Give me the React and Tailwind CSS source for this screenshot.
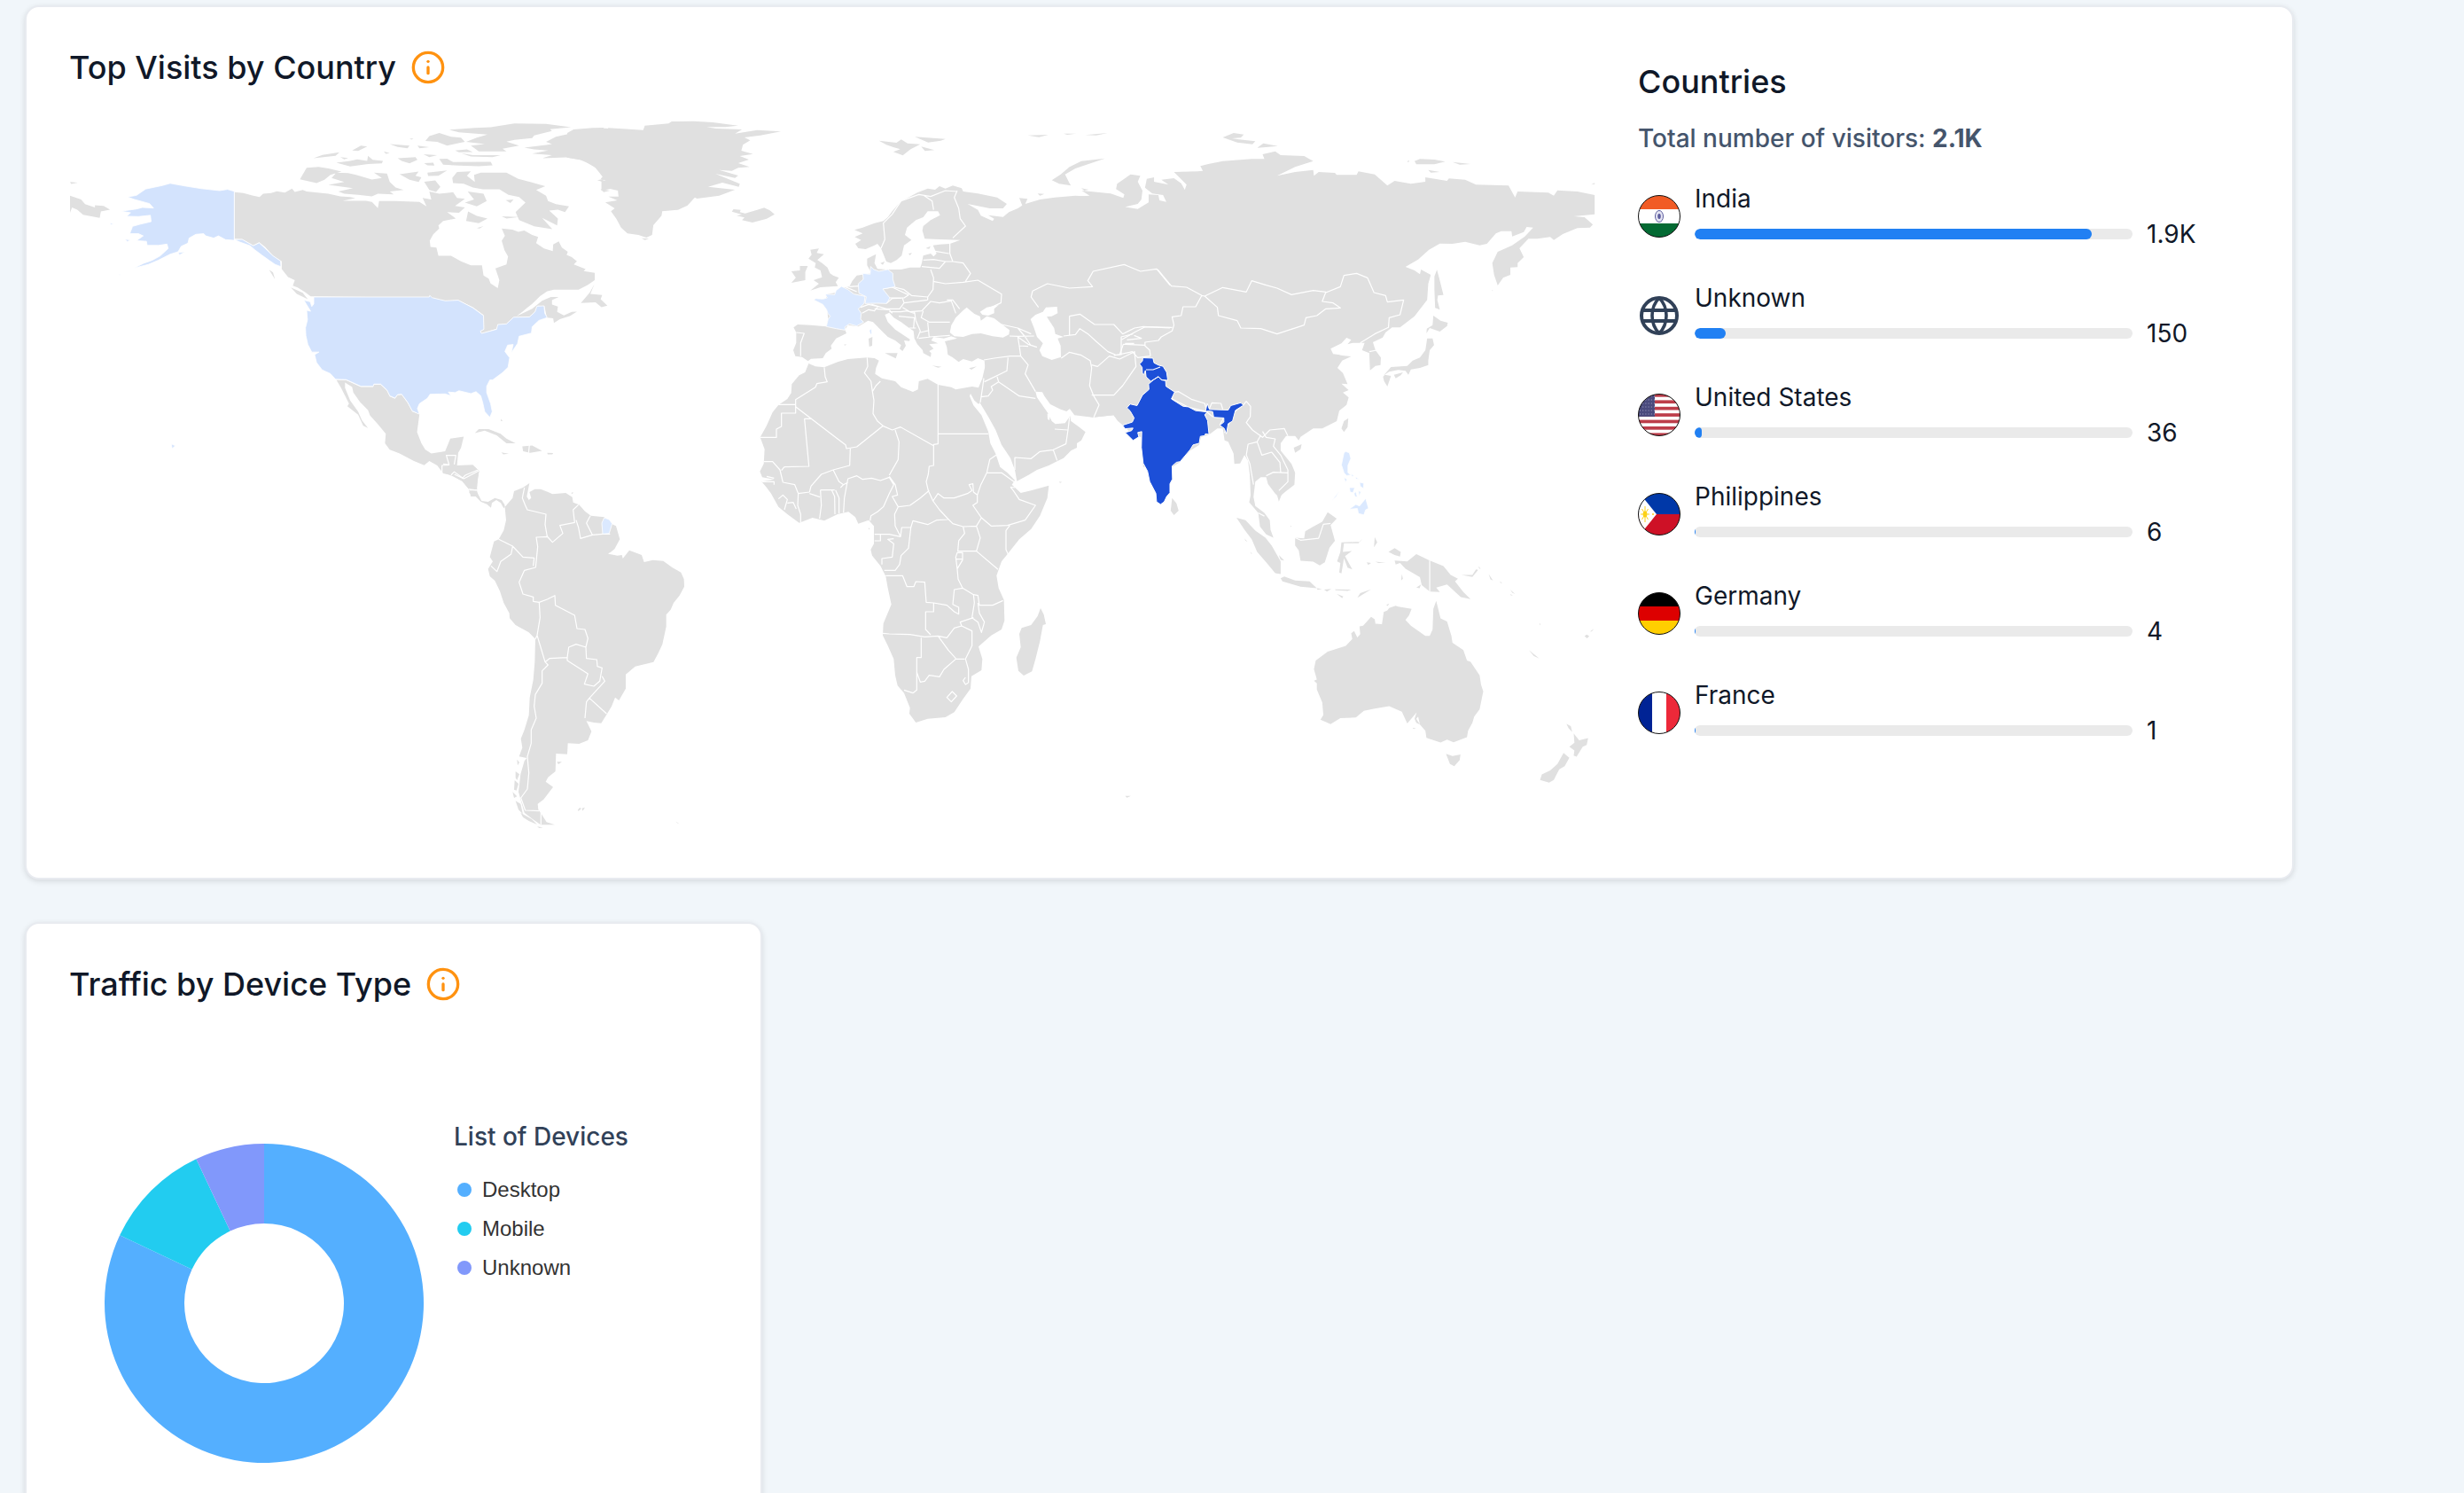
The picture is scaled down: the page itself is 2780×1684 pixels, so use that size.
import React from 'react';
import { Info } from 'lucide-react';

const countries = [
  { name: 'India', visits: '1.9K', percent: 90.7, flag: 'in' },
  { name: 'Unknown', visits: '150', percent: 7.1, flag: null },
  { name: 'United States', visits: '36', percent: 1.7, flag: 'us' },
  { name: 'Philippines', visits: '6', percent: 0.28, flag: 'ph' },
  { name: 'Germany', visits: '4', percent: 0.22, flag: 'de' },
  { name: 'France', visits: '1', percent: 0.2, flag: 'fr' },
];

const devices = [
  { name: 'Desktop', share: 82, color: '#54afff' },
  { name: 'Mobile', share: 11, color: '#22ccf0' },
  { name: 'Unknown', share: 7, color: '#8198fb' },
];

// Each region has its own local coordinate grid, placed on the map by transform.
const regions = [
  {
    id: 'north-america',
    transform: 'scale(0.44643 0.35714)',
    land: `M593,607 615,610 640,618 656,622 665,612 685,610 700,604 720,608 738,596 745,606 765,600 775,605 830,612 860,620 885,622 898,626 866,634 925,634 940,638 955,657 958,635 1000,635 1060,638 1078,652 1068,625 1090,630 1085,605 1110,612 1145,607 1155,625 1175,628 1150,650 1175,655 1160,672 1130,670 1152,690 1120,698 1108,712 1110,722 1095,740 1086,760 1088,780 1103,782 1108,808 1140,808 1165,825 1190,838 1218,838 1222,870 1235,880 1240,895 1258,910 1262,885 1252,848 1280,835 1284,810 1275,790 1268,760 1276,745 1268,722 1295,725 1310,732 1325,728 1345,742 1360,748 1355,768 1375,785 1397,793 1398,772 1412,762 1420,782 1435,795 1432,805 1445,812 1458,825 1450,835 1480,850 1475,856 1503,862 1503,885 1485,900 1462,915 1400,915 1383,920 1365,935 1345,960 1332,972 1320,985 1305,999 1345,975 1370,950 1392,938 1412,938 1395,948 1395,962 1410,968 1408,985 1425,996 1445,985 1458,984 1440,998 1415,1008 1400,1020 1398,1005 1382,1003 1376,967 1360,965 1352,985 1338,1000 1298,1002 1280,1022 1258,1025 1255,1038 1217,1053 1214,1045 1223,1040 1222,995 1195,970 1158,948 1125,950 1090,940 785,936 770,922 752,908 740,902 745,885 728,875 712,850 712,825 690,808 670,780 655,765 640,775 612,755 593,754Z
      M775,530 805,527 830,532 863,542 835,552 820,568 800,578 758,566Z
      M850,545 880,547 900,552 940,567 965,562 945,545 978,548 985,575 1000,592 1020,600 985,605 995,614 955,612 940,620 905,615 870,612 855,605 892,594 830,584 870,575 838,562Z
      M1135,410 1200,404 1240,402 1300,390 1380,391 1443,402 1390,408 1395,414 1350,428 1345,436 1300,442 1280,447 1312,460 1270,470 1280,478 1210,478 1190,460 1225,455 1178,448 1205,435 1232,425 1160,418Z
      M1085,430 1110,420 1140,432 1165,435 1175,448 1158,452 1130,460 1105,448 1075,445Z
      M1110,502 1130,501 1145,512 1240,511 1245,522 1210,525 1160,523 1120,520Z
      M1165,484 1195,490 1265,490 1245,496 1190,494Z M1150,475 1180,472 1195,480 1160,481Z
      M792,500 815,489 858,481 848,492 Z M850,514 885,508 903,503 928,508 930,492 942,505 968,508 965,516 930,518 885,526Z
      M860,496 880,499 870,503Z M890,475 912,460 928,463 905,477Z M985,455 1035,460 1030,468 1005,464Z M1055,460 1085,465 1060,468Z M1005,500 1050,496 1055,505 1035,516 1015,508Z M1070,487 1105,490 1085,496Z M1072,515 1095,514 1098,523 1080,522Z M1080,545 1130,538 1108,555 1082,556Z
      M1010,550 1058,542 1050,555 1065,560 1058,575 1035,568Z M1072,574 1100,570 1113,590 1102,606 1085,600Z M1035,438 1045,437 1040,441Z M970,478 985,484 975,486Z
      M1155,543 1190,541 1180,555 1200,575 1198,552 1215,545 1280,545 1310,565 1340,575 1378,588 1355,600 1380,618 1385,635 1405,645 1438,652 1428,670 1410,662 1388,665 1410,690 1408,712 1370,688 1396,724 1350,715 1312,695 1303,670 1328,640 1312,622 1285,615 1262,598 1220,598 1195,592 1172,580 1145,578 1143,562Z
      M1182,605 1222,612 1230,635 1205,652 1175,640 1198,630Z M1183,668 1205,682 1232,690 1210,705 1178,698Z M1278,632 1298,630 1290,641Z M1268,683 1312,685 1280,690Z M1205,720 1222,714 1212,722Z
      M1502,898 1492,928 1522,932 1518,945 1535,965 1520,970 1505,955 1468,957 1490,925Z
      M735,908 765,925 778,945 750,928Z M680,852 690,860 695,882Z
      M177,618 205,630 215,645 240,655 240,648 262,650 278,662 255,668 252,688 210,678 195,662 182,655 177,672Z M177,575 197,577 180,581Z
      M850,1200 875,1201 912,1222 943,1222 945,1215 962,1215 978,1234 985,1252 998,1259 1005,1248 1015,1247 1030,1272 1042,1300 1060,1308 1054,1365 1065,1400 1075,1420 1090,1432 1125,1425 1138,1385 1172,1379 1165,1415 1158,1430 1155,1470 1195,1468 1211,1488 1206,1520 1205,1568 1190,1568 1185,1545 1168,1520 1140,1500 1120,1495 1105,1470 1085,1456 1072,1469 1045,1455 1010,1432 985,1420 973,1400 975,1370 955,1340 935,1312 930,1295 910,1270 893,1240 890,1222 872,1208 872,1225 885,1265 905,1300 915,1328 930,1352 918,1345 905,1310 878,1283 882,1275 862,1225Z
      M1200,1368 1210,1355 1235,1355 1265,1370 1280,1385 1303,1400 1280,1400 1255,1375 1225,1360Z M1320,1410 1345,1407 1370,1424 1340,1430 1322,1425Z M1267,1429 1286,1433 1272,1435Z M1383,1430 1398,1431 1396,1435 1384,1435Z M1266,1322 1270,1330 1266,1330Z
      M1325,466 1380,458 1395,455 1380,448 1405,432 1440,422 1450,410 1530,405 1568,408 1568,585 1518,565 1525,555 1505,530 1475,507 1430,497 1370,500 1395,490 1345,485 1385,475 1350,472Z
      M1520,570 1555,572 1568,590 1520,602Z`,
    border: `M1117,1497 1117,1470 1135,1468 1128,1438 1152,1438 1148,1467 M1140,1500 1148,1490 1172,1512 1186,1503 1210,1487 M1185,1545 1205,1548 M1338,1405 1336,1430`,
    tint: [
      {
        fill: '#d3e3fd',
        d: `M592,604 575,598 555,602 510,596 470,588 430,579 410,586 368,597 345,617 322,622 340,630 378,643 388,657 360,655 345,660 306,667 330,672 320,683 350,684 380,680 382,700 355,708 335,715 328,738 350,738 362,745 345,760 370,762 372,775 400,775 422,771 425,785 405,808 385,822 362,832 338,847 375,835 400,822 430,803 450,795 458,778 475,768 478,752 495,740 515,738 520,745 540,752 552,745 570,757 592,759Z
          M592,757 612,756 640,776 655,767 668,782 690,808 709,824 710,842 695,835 680,822 662,806 645,790 632,776 605,764Z
          M278,704 288,708 280,710Z M316,755 330,758 322,763Z M450,798 468,795 454,805Z M433,1402 443,1408 435,1417Z M300,865 306,868 302,869Z
          M793,938 1085,938 1086,933 1092,940 1125,950 1158,948 1195,972 1222,997 1223,1040 1214,1046 1217,1053 1255,1040 1258,1025 1280,1023 1298,1002 1338,1001 1352,985 1357,967 1375,966 1377,990 1383,1003 1362,1012 1345,1032 1343,1052 1312,1062 1308,1085 1292,1115 1297,1088 1283,1090 1276,1110 1288,1130 1284,1160 1270,1177 1245,1200 1238,1200 1230,1220 1230,1240 1240,1275 1244,1300 1238,1318 1225,1300 1220,1272 1215,1250 1203,1237 1190,1243 1160,1234 1150,1240 1133,1238 1140,1250 1125,1244 1087,1245 1080,1258 1060,1275 1055,1290 1060,1308 1042,1298 1030,1270 1015,1245 1005,1246 998,1257 985,1250 978,1232 962,1213 945,1213 943,1220 912,1220 875,1199 848,1198 835,1180 814,1168 800,1145 795,1120 806,1112 788,1112 778,1088 773,1060 772,1035 777,1010 775,980 785,983 768,948 784,953 788,968 793,960Z`,
      },
    ],
  },
  {
    id: 'north-atlantic',
    transform: 'translate(640 100) scale(0.35714 0.33333)',
    land: `M0,150 20,138 80,133 115,132 120,145 130,133 240,140 245,125 320,118 330,111 400,110 460,114 540,125 500,130 440,130 470,135 552,138 530,152 600,140 675,145 610,158 560,165 578,175 555,190 550,210 587,221 545,228 574,240 540,252 576,265 540,268 520,278 480,275 540,294 530,302 468,288 545,322 542,332 490,318 445,332 530,342 480,362 410,372 403,368 380,395 350,410 300,415 298,430 272,462 268,495 250,504 225,495 190,490 170,470 155,440 138,415 150,405 120,385 158,378 130,365 162,365 160,345 120,335 162,328 120,310 85,262 40,240 0,233Z
      M95,310 115,305 112,316Z M105,340 135,345 115,350Z M235,506 258,508 245,512Z
      M525,408 548,410 545,418 562,422 600,410 622,403 640,412 655,425 630,440 585,453 552,445 560,436 535,430 552,426 520,416Z
      M985,176 1040,183 1055,172 1075,185 1115,188 1085,205 1060,226 1030,214 1052,205 1030,198 1008,190Z M1098,163 1195,170 1180,176 1140,182Z M1118,196 1160,208 1130,211Z M1455,158 1520,156 1490,164Z
      M768,545 795,541 788,556 811,560 790,580 805,590 822,605 830,625 840,632 858,640 848,655 855,668 800,672 768,683 795,660 778,648 805,638 800,615 782,605 785,590 762,575 772,562Z
      M735,600 760,600 752,620 752,648 708,657 722,640 708,618 735,615Z M0,1378 15,1382 5,1390Z`,
  },
  {
    id: 'europe-middle-east',
    transform: 'translate(820 180) scale(0.33333)',
    land: `M432,238 460,230 500,215 530,208 545,195 560,175 590,140 620,125 645,112 680,98 705,102 720,90 740,98 765,88 795,97 800,108 850,115 915,128 948,150 935,165 890,165 815,150 850,170 860,190 900,208 905,200 885,188 935,194 955,178 985,165 1000,155 990,130 1018,133 1010,150 1060,135 1110,128 1180,122 1230,125 1500,250 1500,760 1350,895 1325,885 1310,865 1242,872 1180,862 1165,840 1150,852 1130,845 1095,828 1075,800 1068,787 1045,785 1050,805 1085,855 1100,885 1112,895 1145,892 1162,868 1165,885 1190,903 1214,922 1200,950 1185,960 1185,975 1165,985 1140,1010 1115,1022 1090,1035 1050,1050 1020,1068 982,1088 975,1050 960,1010 930,965 910,915 885,870 858,825 858,800 862,770 870,740 875,710 872,680 850,672 830,683 800,675 785,685 765,670 748,660 745,635 738,615 780,605 760,598 735,605 700,600 692,612 715,622 685,625 700,640 685,648 692,655 690,668 665,655 663,645 645,625 635,605 632,580 610,565 590,550 565,535 550,518 535,525 545,550 570,575 620,608 618,614 600,612 606,630 595,648 585,640 590,628 570,612 545,600 520,575 495,550 478,545 462,555 445,565 410,560 400,575 405,588 370,605 352,630 355,640 335,655 325,672 285,674 275,682 255,668 232,665 225,645 235,620 235,585 226,568 240,558 285,560 337,565 343,540 340,510 325,490 295,475 335,470 340,455 370,450 385,435 415,430 425,410 440,392 470,388 490,385 475,358 475,335 505,320 500,350 510,370 540,372 590,372 620,365 655,365 660,350 665,325 690,318 700,328 710,318 698,290 720,287 755,285 790,272 720,270 670,268 662,240 665,225 690,205 722,188 715,175 680,175 665,195 640,205 610,230 603,255 625,272 600,290 592,325 575,340 555,350 540,345 522,300 510,285 500,290 470,303 445,300 435,285 455,272 433,262 460,250Z
      M520,350 535,345 528,356Z M615,318 627,316 620,324Z M673,300 690,293 685,302Z
      M535,655 578,655 572,673Z M480,606 493,600 492,630 482,633Z M695,697 727,701 715,704Z M820,706 846,700 828,711Z M396,626 406,625 400,629Z
      M1100,70 1130,50 1160,25 1200,5 1280,-4 1180,30 1145,50 1160,80 1165,88 1125,82Z M1052,115 1075,116 1060,122Z M1200,97 1225,102 1210,105Z`,
    sea: `M1028,540 1045,525 1070,515 1080,500 1118,498 1120,520 1100,530 1083,532 1108,570 1112,590 1140,600 1120,605 1130,630 1131,668 1100,678 1068,665 1058,645 1070,622 1050,600 1040,570Z
      M755,585 760,560 775,535 798,512 812,500 826,512 838,522 857,530 860,545 880,530 905,537 935,560 957,577 955,592 935,602 900,598 860,588 830,590 800,600 770,598Z M857,515 880,500 920,492 905,505 905,520 885,528 865,525Z
      M1085,860 1095,862 1092,882 1086,878Z`,
    border: `M870,678 905,672 960,665 995,665 M952,670 948,715 872,752 M915,735 920,752 M860,803 885,800 900,780 895,768 920,752 990,800 1045,808 M990,630 995,665 1020,695 1010,725 1045,785 M975,1050 975,1008 1030,1012 1060,988 1105,982 1118,1018 M1105,982 1148,962 1155,915 1110,912 M1155,915 1160,872
      M870,740 866,770 858,822 M1132,672 1160,652 1200,662 1230,680 1235,705 1228,765 1242,800 1260,830 1242,872 M1235,797 1310,797 1340,765 1385,700 1380,650 1330,675 1295,665 1255,700 1235,695 M1315,660 1290,650 1250,615 1225,592 1195,572 1180,592 1140,597 M1160,595 1160,530 1195,523 1245,558 1310,558 1340,590 1380,570 1410,565 1500,570 M1310,662 1335,660 1335,600 1375,590
      M1055,500 1030,465 1035,445 1085,420 1160,435 1238,430 1222,410 1240,378 1345,355 1400,378 1455,370 1500,425 M930,558 985,570 1030,590 M957,597 985,598 1040,597 M985,600 1020,625 1050,635 M985,598 990,630 1020,632 M985,570 1010,600 1030,630
      M522,300 535,270 530,215 560,185 590,140 650,118 690,125 M665,120 695,140 700,170 M690,125 740,105 780,108 M780,105 770,128 785,165 790,200 808,225 765,265 M755,285 755,318 M705,310 752,318 M665,340 700,338 740,345 M755,318 765,345 800,350 825,385 808,412 M660,362 720,368 740,345 765,345 M690,372 700,400 698,440 680,465 M698,412 740,420 800,415 850,408 930,455 928,485 895,500 M568,432 600,440 625,460 680,465
      M530,437 560,432 615,458 600,468 552,468 M540,487 560,470 600,468 M595,470 600,485 585,505 540,505 490,490 M600,485 680,475 M595,500 620,515 660,512 690,480 720,485 760,478 775,520 M665,512 658,535 685,550 755,550 M745,475 765,475 788,505 M680,550 685,600 755,595 M635,515 640,545 655,580 645,605 M685,578 655,585 M550,515 590,515 610,512 635,520 M582,530 635,535 632,572 M618,570 640,570 M650,605 690,600 M235,585 262,588 250,620 250,665 M453,500 480,490 512,497 500,512 480,508 458,520 M500,505 550,508 560,520 M400,430 440,447 M415,430 448,428 M680,465 680,475`,
    tint: [
      {
        fill: '#dbe9ff',
        d: `M295,475 300,470 325,472 340,468 333,455 365,457 370,443 388,429 410,440 430,455 468,463 465,487 445,505 455,520 453,540 463,550 440,563 415,556 400,566 400,577 370,572 337,565 343,540 350,530 342,520 338,508 325,490Z
          M487,362 498,372 515,378 545,372 562,385 562,405 570,430 528,438 552,468 545,480 540,487 508,486 468,487 472,464 447,452 445,420 462,405 460,385 485,388Z
          M482,578 490,572 491,588 486,592Z`,
      },
    ],
  },
  {
    id: 'africa',
    transform: 'translate(830 380) scale(0.33333)',
    land: `M247,90 270,100 300,103 345,85 380,75 445,70 470,72 485,80 475,105 472,125 495,140 540,150 560,170 600,186 617,178 620,150 650,142 685,162 730,170 745,178 800,168 822,172 835,140 850,75 862,120 845,180 828,222 822,227 808,215 795,192 792,200 805,232 832,265 855,320 862,360 880,395 895,440 920,460 945,485 935,500 965,528 1000,520 1060,503 1055,545 1030,605 1000,650 960,685 920,735 900,760 883,808 890,850 908,890 910,960 900,990 865,1010 822,1048 835,1090 832,1128 798,1148 795,1190 770,1225 740,1270 710,1287 650,1292 610,1305 588,1275 590,1255 570,1205 548,1180 540,1145 535,1090 515,1045 498,1010 500,970 527,905 515,850 508,810 490,775 462,740 457,720 468,700 468,640 450,620 415,632 405,610 382,592 345,600 300,622 260,612 215,629 175,600 145,575 120,530 105,510 88,490 130,482 90,475 82,455 95,430 98,380 83,340 105,300 125,255 145,230 175,210 188,190 190,160 215,130 235,120Z
      M1032,918 1043,940 1050,972 1040,975 1030,1030 1015,1090 1003,1132 975,1146 957,1130 950,1085 965,1050 960,1005 968,985 1000,975 1022,945Z M450,645 454,650 450,652Z M1095,490 1105,491 1098,494Z`,
    border: `M300,103 303,135 310,152 275,158 270,170 203,212 203,258 155,258 155,303 138,312 138,340 83,340 M145,229 203,229 M203,236 345,345 372,365 375,378 410,372 500,300 M258,277 233,277 248,438 165,440 155,452 M445,70 447,100 436,122 458,150 463,185 475,165 490,150 M463,185 468,215 465,260 480,285 500,302 530,315 558,305 670,368 M685,162 685,362 670,364 670,435 655,438 652,465 645,490 652,520 668,555 M685,328 855,328 M388,378 386,435 330,450 M540,315 553,355 550,415 520,468
      M365,595 368,545 380,480 410,470 430,482 460,478 490,486 520,475 535,500 520,530 500,575 480,592 458,605 455,622 M520,472 540,500 548,535 530,540 550,575 590,570 625,545 655,520 M550,575 538,600 540,640 558,676 562,645 593,645 M470,668 520,668 558,676 M593,645 600,622 650,635 680,620 718,618 M668,555 690,585 718,615 735,632 770,642 815,640 832,612 M668,555 685,530 705,545 740,545 785,530 800,520 790,500 803,497 805,525 818,535
      M882,400 860,415 850,460 830,500 818,535 818,560 803,570 832,612 865,640 920,638 980,620 1015,570 960,550 940,520 930,508 M850,460 900,460 945,492 M930,508 945,510 M928,638 915,655 915,720 922,735 M770,642 775,665 755,690 752,725 815,725 888,787 M815,725 828,680 815,640 M750,730 768,730 768,755 750,785 745,745Z M745,752 768,752 M750,785 753,820 768,850 740,855 735,905 755,915 755,938 740,930 715,908 670,900 645,898 640,830 610,828 603,845 580,845 565,808 508,808 M768,850 805,872 820,875 825,908 870,908 905,892
      M593,645 585,715 560,740 555,770 540,790 503,790 M535,683 515,685 535,700 530,745 495,750 495,770 M470,690 490,690 490,668 M670,900 670,930 643,930 643,990 660,1008 M498,1003 520,1005 590,1007 640,1015 685,1012 M628,1018 628,1085 613,1085 613,1195 600,1205 570,1195 M613,1135 625,1168 640,1165 655,1145 690,1150 705,1125 745,1090 775,1090 M685,1012 720,1060 745,1088 M685,1012 715,1018 740,985 765,978 800,995 800,1045 778,1090 788,1125 788,1170 M765,978 760,965 805,950 M805,872 808,900 800,950 820,965 832,1000 842,965 825,935 820,900 M778,1152 770,1163 778,1176 788,1170
      M733,1200 748,1215 730,1235 715,1220Z M95,422 125,422 150,450 160,492 M90,490 130,490 130,500 M160,492 200,500 212,530 250,525 M250,525 255,505 290,465 330,450 M330,450 350,490 365,500 380,492 M287,518 335,518 M287,518 290,570 284,615 M325,518 335,540 336,600 M338,518 350,545 350,598 M355,510 365,500 M250,530 285,542 M212,530 210,570 220,600 220,628 M145,548 160,535 175,550 165,585 M175,562 195,560 205,582 M105,472 130,478`,
  },
  {
    id: 'asia',
    transform: 'translate(1200 100) scale(0.40816 0.33333)',
    land: `M-5,375 30,365 72,362 50,345 130,355 165,370 168,358 145,340 148,322 185,290 212,295 205,315 218,345 215,375 205,390 170,400 205,407 235,385 235,358 262,360 265,378 284,383 275,360 245,355 225,335 230,305 250,300 250,315 290,325 270,308 305,303 325,320 335,342 340,325 305,282 370,280 385,278 378,262 400,255 440,245 520,238 555,238 550,222 585,212 600,225 665,228 690,245 640,265 590,295 640,282 690,275 692,295 705,282 750,285 755,292 810,292 815,280 860,290 895,328 915,312 960,322 1000,315 1000,300 1060,312 1065,304 1110,308 1140,325 1230,328 1248,368 1255,348 1340,352 1355,362 1365,344 1420,348 1468,360 1468,425 1410,432 1440,435 1463,460 1455,470 1420,472 1380,492 1355,512 1345,502 1310,508 1285,508 1260,540 1272,570 1255,590 1255,604 1235,605 1235,630 1215,640 1200,666 1190,630 1185,590 1200,552 1240,530 1275,500 1298,470 1280,468 1272,485 1240,500 1238,482 1210,482 1195,490 1170,525 1150,530 1110,518 1075,525 1040,524 1010,545 980,578 945,603 970,615 985,628 988,612 1015,630 1008,660 1005,715 970,770 930,808 908,808 890,825 882,842 855,858 862,885 877,910 876,935 862,938 847,953 845,895 825,885 832,860 800,860 785,865 795,850 782,843 768,862 738,880 745,898 760,900 770,903 795,906 770,920 757,945 772,962 785,1000 768,998 788,1020 772,1028 788,1045 782,1070 762,1090 755,1125 715,1150 690,1150 655,1178 650,1190 640,1175 615,1175 600,1200 600,1225 630,1270 640,1300 638,1340 615,1362 595,1382 585,1370 565,1338 560,1315 545,1315 530,1330 525,1380 517,1380 515,1310 510,1260 500,1240 488,1268 472,1270 470,1235 455,1195 445,1190 440,1150 425,1150 403,1170 380,1180 375,1205 350,1225 320,1265 300,1280 220,1280 215,1180 190,1170 165,1140 150,1125 138,1105 80,1112 30,1105 15,1080 -5,1085Z
      M440,165 470,150 498,155 490,166 465,168 485,172 530,178 522,188 480,182Z M535,200 552,185 592,194 560,198Z M970,245 985,238 1025,240 1055,247 1025,256 975,256Z M1075,248 1125,255 1095,257Z M1008,275 1040,282 1015,284Z M950,246 956,242 953,250Z M1458,325 1468,319 1468,323Z M0,152 35,152 10,156Z M60,157 122,150 90,158Z
      M1032,613 1038,640 1050,698 1035,700 1033,715 1040,748 1027,742 1025,680 1025,635Z M1022,768 1042,785 1062,792 1060,803 1040,822 1012,810 1003,828 1004,812 1020,800Z
      M1005,845 1020,845 1024,868 1012,885 1008,920 1008,935 985,945 960,950 953,968 945,955 925,952 900,958 885,970 905,942 950,938 965,920 985,910 1000,885Z M888,968 905,972 895,1008 886,990 883,975Z M913,968 938,960 932,970 918,980Z M787,1115 785,1145 775,1162 768,1150 775,1125Z M636,1215 658,1203 655,1220 640,1232Z M1183,683 1188,682 1184,685Z`,
    border: `M260,612 298,668 340,672 382,700 390,702 440,673 505,688 520,650 560,665 590,675 630,697 690,683 725,688 715,720 745,725 765,742 725,745 700,768 670,775 665,800 590,830 545,812 490,810 480,785 428,768 425,740 390,702 M725,690 765,670 775,632 810,625 840,640 858,690 890,700 895,722 940,715 930,765 900,775 898,808 860,830 820,860 M382,700 365,738 330,738 325,768 300,772 305,800 300,820 270,840 262,852 225,858 225,870 238,885 240,905 M300,808 225,806 195,825 160,850 M175,850 215,845 195,835 M170,862 195,862 M155,900 165,865 225,868 M140,903 190,890 205,910 240,905
      M397,1093 390,1065 355,1052 318,1025 302,1028 300,1050 345,1078 397,1093 M402,1085 410,1063 435,1065 440,1085 M445,1165 470,1095 497,1070 505,1058 517,1075 516,1110 505,1130 522,1155 550,1180 570,1155 610,1150 620,1175 M397,1095 412,1110 442,1115 432,1138 M545,1172 535,1195 510,1203 505,1240 515,1270 525,1340 M550,1160 560,1180 585,1185 580,1210 600,1240 620,1290 620,1330 595,1360 M535,1195 548,1240 575,1230 598,1265 600,1298 M560,1310 580,1298 620,1300 M845,890 865,885`,
  },
  {
    id: 'oceania',
    transform: 'translate(1200 360) scale(0.40816 0.35714)',
    land: `M518,480 530,500 523,550 530,590 555,612 570,635 572,665 580,690 560,680 543,655 538,612 513,578 520,540 515,490Z M590,555 605,548 595,576Z M300,565 312,582 318,605 305,619 296,605Z
      M478,627 503,635 530,668 558,690 575,715 600,765 600,805 585,802 560,768 535,735 520,695 500,665Z M600,818 610,813 640,825 680,828 700,850 655,845 605,828Z
      M640,690 665,692 668,670 690,655 715,640 730,610 755,630 738,650 750,700 735,722 722,768 708,778 690,766 655,763 650,730 640,715Z
      M768,705 820,703 826,693 815,708 775,708 772,735 797,732 778,748 798,790 785,785 775,755 768,803 762,800 765,770 756,765 765,735Z M700,850 715,852 702,855Z M720,854 740,852 728,860Z M750,853 795,854 785,858 752,856Z M812,880 820,865 850,853 830,867Z M755,867 773,876 770,881Z M838,768 850,770 842,776Z M862,766 890,769 870,770Z M860,688 867,705 858,720Z M500,692 508,703 503,700Z M516,735 522,742 518,740Z M595,745 610,762 600,760Z M935,805 938,820 933,825Z M975,848 988,838 984,850Z
      M898,735 915,723 932,735 930,750 915,745Z M915,762 950,765 975,742 1012,762 1050,780 1070,808 1090,820 1082,828 1105,862 1125,884 1098,878 1060,838 1030,848 1040,862 1012,860 990,840 985,815 945,788 930,770 918,775Z M1100,808 1130,808 1140,790 1146,792 1130,814Z M1148,780 1153,790 1148,786Z M1175,805 1187,825 1180,822Z M1205,828 1213,833 1208,833Z M1235,855 1248,868 1240,864Z M1235,868 1242,873 1236,872Z M1254,884 1260,888Z M1286,1045 1315,1072 1300,1064Z M1316,960 1319,966 1315,964Z M1440,1001 1446,996 1453,1001 1447,1008Z M1455,986 1466,978 1460,986Z M1082,748 1088,752Z M627,652 630,655 627,656Z
      M1410,1308 1425,1330 1450,1323 1446,1345 1435,1350 1418,1382 1410,1378 1412,1362 1398,1350 1412,1338Z M1390,1278 1402,1285 1406,1304 1396,1292Z M1382,1370 1398,1385 1385,1412 1370,1422 1355,1455 1342,1464 1317,1455 1322,1438 1345,1425 1365,1405Z
      M1057,1373 1075,1380 1097,1375 1095,1392 1080,1412 1068,1405Z M892,902 900,898 896,906Z M965,1290 974,1293 967,1294Z M170,1506 186,1506 175,1511Z M12,1056 16,1055Z
      M692,1105 697,1078 730,1050 780,1032 798,1010 795,992 803,985 812,1005 820,995 818,970 828,968 850,940 860,948 862,962 880,963 885,925 895,920 900,912 918,905 925,908 962,915 955,935 945,950 960,968 1000,1000 1012,1000 1020,980 1022,915 1030,890 1042,945 1060,955 1072,1000 1075,1022 1105,1045 1115,1078 1125,1082 1150,1125 1154,1155 1160,1175 1150,1232 1135,1255 1130,1275 1118,1300 1115,1320 1078,1336 1060,1328 1042,1337 1003,1322 1000,1300 985,1280 975,1275 970,1262 976,1242 950,1277 935,1240 900,1222 860,1230 830,1237 808,1258 765,1260 738,1279 710,1265 718,1250 715,1210 700,1170 700,1150 692,1142 700,1138Z`,
    sea: 'M975,1262 980,1255 985,1280 978,1268Z',
    border: 'M640,690 655,698 705,692 718,648 738,645 M1012,762 1012,862 M538,612 555,622',
    tint: [
      {
        fill: '#dbe9ff',
        d: `M775,422 780,418 790,422 794,440 786,462 786,485 795,492 782,494 775,485 768,460Z M792,598 808,585 818,590 835,566 843,598 835,602 830,618 815,614 812,598 792,600Z M793,487 802,494 798,498Z M806,498 818,506 808,505Z M818,515 830,518 829,535 820,528Z M790,532 805,532 800,548 792,546Z M803,550 808,545 812,562 805,560Z M815,542 822,545 817,560Z M775,500 784,506 779,515Z M762,543 755,558 742,575 750,560Z`,
      },
      {
        fill: '#1c4fd8',
        stroke: true,
        d: `M219,122 247,123 250,138 262,145 275,149 285,168 288,193 270,192 262,181 250,190 241,196 228,182 226,162 222,175 218,172 217,152 210,142 218,132Z
          M248,192 262,182 272,192 282,194 283,212 307,230 298,252 330,275 345,277 365,289 397,293 390,302 398,320 402,364 392,362 390,368 378,370 375,392 358,397 350,412 322,450 312,452 300,464 301,505 294,520 294,548 285,560 278,577 268,585 257,577 255,550 238,513 232,480 220,455 215,405 216,355 205,358 208,372 192,383 170,358 188,352 192,344 170,346 163,335 190,325 195,312 184,290 175,280 184,268 203,273 218,240 236,222 235,205Z
          M397,266 403,285 455,287 462,273 490,264 497,272 475,288 467,322 455,330 450,362 444,345 432,335 443,325 443,312 415,310 412,292 400,290 392,292Z`,
      },
    ],
  },
  {
    id: 'south-america',
    transform: 'translate(500 520) scale(0.33333)',
    land: `M0,0 40,0 42,20 100,15 121,32 113,98 118,112 130,135 152,138 175,125 198,132 208,148 213,200 205,235 188,265 172,272 158,325 168,340 152,365 158,390 175,405 192,440 205,480 224,515 225,532 245,555 290,580 312,602 310,680 305,740 293,800 290,860 275,910 263,940 268,970 257,1000 283,1005 275,1015 262,1060 255,1120 265,1155 275,1190 300,1210 330,1231 378,1231 350,1222 330,1190 322,1180 320,1160 340,1145 372,1103 347,1085 355,1070 380,1050 382,990 420,992 422,955 460,957 490,945 502,915 490,890 480,870 485,880 510,885 535,887 555,855 570,830 582,800 595,810 618,770 618,722 650,695 712,680 728,650 742,620 755,560 755,520 770,503 780,480 800,455 816,425 815,400 805,377 775,360 745,338 710,335 680,342 672,318 630,302 608,330 605,318 590,320 560,314 580,298 598,265 585,220 575,215 545,190 500,185 480,170 460,148 440,140 437,122 415,108 370,112 355,105 330,95 310,95 292,105 298,125 290,132 283,120 292,75 270,90 240,102 235,125 205,160 195,142 180,132 165,142 162,158 148,146 128,138 110,120 88,108 90,98 65,68 30,50 0,40Z
      M250,1010 258,1020 252,1030Z M245,1050 258,1060 250,1080 245,1072Z M242,1080 255,1092 248,1115 258,1118 240,1112Z M235,1120 250,1135 240,1140Z M245,1150 262,1160 270,1195 255,1180Z M262,1190 300,1212 318,1230 290,1218 270,1205Z M318,1237 338,1240 325,1242Z M455,1182 462,1173 468,1176 458,1184Z M470,1175 480,1172 472,1184Z M788,1220 800,1228 792,1225Z M433,108 440,105 438,112Z M385,1018 402,1018 390,1026Z`,
    border: `M275,90 268,125 278,150 285,165 348,180 345,215 352,255 370,275 405,245 395,218 445,208 440,165 458,148 M450,200 458,225 465,262 505,250 485,210 498,185 M505,250 540,247 565,247 M188,265 235,288 270,325 308,328 305,355 M235,290 230,315 195,340 182,374 162,355 M355,256 315,258 320,290 313,360 275,370 257,410 270,450 305,460 305,475 325,478 352,468 378,455 380,488 445,522 453,567 480,570 490,600 483,630 M325,478 328,530 318,590 330,630 345,680 360,668 420,665 425,630 450,620 483,630 485,668 520,672 522,695 538,700 530,745 510,762 478,755 490,720 420,675 420,665 M538,728 547,745 495,802 553,855 M495,802 485,815 480,870 M318,590 312,602
      M345,680 355,690 335,710 335,752 312,790 308,830 315,870 298,910 298,955 285,1000 290,1055 285,1110 263,1140 278,1182 325,1184 M331,1186 331,1230 M0,10 18,12 M38,45 65,58 75,48 118,30 M90,98 113,98 M560,314 580,308 588,318 M590,293 618,293`,
    tint: [{ fill: '#dbe9ff', d: 'M545,192 562,198 572,212 562,245 540,247 537,210Z' }],
  },
];

function WorldMap() {
  return (
    <svg viewBox="78 112 1722 830" className="mt-4 block w-full">
      {regions.map((r) => (
        <g key={r.id} transform={r.transform} className="fill-[#e0e0e0]">
          <path d={r.land} />
        </g>
      ))}
      {regions.map((r) => (
        <g key={r.id} transform={r.transform}>
          {r.sea && <path d={r.sea} fill="#fff" />}
          <path d={r.border} fill="none" stroke="#fff" strokeWidth="1.2" strokeLinejoin="round" vectorEffect="non-scaling-stroke" />
        </g>
      ))}
      {regions.map((r) => (
        <g key={r.id} transform={r.transform}>
          {(r.tint || []).map((t) => (
            <path
              key={t.fill}
              d={t.d}
              fill={t.fill}
              stroke="#fff"
              strokeWidth={t.stroke ? 1 : 0.8}
              vectorEffect="non-scaling-stroke"
            />
          ))}
        </g>
      ))}
      <path d="M1293 417 l8 0 8 -3" fill="none" stroke="#fff" strokeWidth="1.2" />
    </svg>
  );
}

function FlagArt({ code }) {
  switch (code) {
    case 'in':
      return (
        <>
          <rect width="48" height="48" fill="#fff" />
          <rect width="48" height="16" fill="#f15b25" />
          <rect y="32" width="48" height="16" fill="#046a33" />
          <ellipse cx="24" cy="24" rx="4.5" ry="6.5" fill="#e4e4f2" stroke="#5c5c9d" strokeWidth="1" />
          <ellipse cx="24" cy="24" rx="1.8" ry="3" fill="#5c5c9d" />
        </>
      );
    case 'us':
      return (
        <>
          <rect width="48" height="48" fill="#fff" />
          {[0, 2, 4, 6, 8, 10, 12].map((n) => (
            <rect key={n} y={n * 3.7} width="48" height="3.7" fill="#bd3d4a" />
          ))}
          <rect width="19" height="25.9" fill="#4a4a7d" />
          {[3, 7, 11, 15, 19, 23].map((y) => (
            <path key={y} d={`M2 ${y}H19`} stroke="#a5a5c4" strokeWidth="1" strokeDasharray="1 2.2" />
          ))}
        </>
      );
    case 'ph':
      return (
        <>
          <rect width="48" height="24" fill="#0038a8" />
          <rect y="24" width="48" height="24" fill="#ce1126" />
          <path d="M0 -2 21 24 0 50Z" fill="#fff" />
          <ellipse cx="8" cy="24" rx="2.4" ry="3.4" fill="#fcd116" />
          <path d="M8 15V33M3 24H13M4.5 18 11.5 30M11.5 18 4.5 30" stroke="#fcd116" strokeWidth="1" />
          <circle cx="17" cy="24" r="1" fill="#fcd116" />
        </>
      );
    case 'de':
      return (
        <>
          <rect width="48" height="16" fill="#000" />
          <rect y="16" width="48" height="16" fill="#dd0000" />
          <rect y="32" width="48" height="16" fill="#ffce00" />
        </>
      );
    default:
      return (
        <>
          <rect width="16" height="48" fill="#002395" />
          <rect x="16" width="16" height="48" fill="#fff" />
          <rect x="32" width="16" height="48" fill="#ed2939" />
        </>
      );
  }
}

function CountryIcon({ code }) {
  if (!code) {
    return (
      <svg viewBox="0 0 48 48" className="size-12 shrink-0 fill-none stroke-slate-700" strokeWidth="4">
        <circle cx="24" cy="24" r="20" />
        <path d="M5.5 18H42.5M5.5 30H42.5" />
        <path d="M24 4C18.5 9.5 16 16.500 16 24S18.500 38.500 24 44M24 4C29.500 9.500 32 16.500 32 24S29.500 38.500 24 44" strokeWidth="3.6" />
      </svg>
    );
  }
  return (
    <svg viewBox="0 0 48 48" className="size-12 shrink-0">
      <clipPath id={`flag-${code}`}>
        <circle cx="24" cy="24" r="23.5" />
      </clipPath>
      <g clipPath={`url(#flag-${code})`}>
        <FlagArt code={code} />
      </g>
      <circle cx="24" cy="24" r="23.5" fill="none" stroke="#111" strokeWidth="1" />
    </svg>
  );
}

function CardTitle({ children }) {
  return (
    <div className="flex items-center gap-4">
      <h2 className="text-4xl/10 font-medium text-gray-900">{children}</h2>
      <button type="button" aria-label="More info" className="text-[#ff9210]">
        <Info className="size-10" />
      </button>
    </div>
  );
}

function CountryRow({ country }) {
  return (
    <li className="flex items-center gap-4">
      <CountryIcon code={country.flag} />
      <div className="flex-1">
        <p className="text-[28px]/10 text-gray-900">{country.name}</p>
        <div className="flex items-center gap-4">
          <div className="h-3 flex-1 overflow-hidden rounded-full bg-[#eaeaea]">
            <div className="h-full rounded-full bg-[#2180f3]" style={{ width: `${country.percent}%` }} />
          </div>
          <span className="w-[116px] text-[28px]/10 text-gray-900">{country.visits}</span>
        </div>
      </div>
    </li>
  );
}

function DonutChart() {
  const point = (percent, radius) => {
    const angle = (percent / 100) * 2 * Math.PI;
    return `${180 + radius * Math.sin(angle)} ${180 - radius * Math.cos(angle)}`;
  };
  let start = 0;

  return (
    <svg viewBox="0 0 360 360" className="mt-7 size-[360px] shrink-0">
      {devices.map((device) => {
        const end = start + device.share;
        const large = device.share > 50 ? 1 : 0;
        const d = `M${point(start, 180)}A180 180 0 ${large} 1 ${point(end, 180)}L${point(end, 90)}A90 90 0 ${large} 0 ${point(start, 90)}Z`;
        start = end;
        return <path key={device.name} d={d} fill={device.color} />;
      })}
    </svg>
  );
}

function App() {
  return (
    <main className="h-screen overflow-hidden bg-[#f1f6fa] px-7 pt-1.5 font-[Inter,sans-serif]">
      <div className="grid max-w-[2560px] grid-cols-3 gap-x-8 gap-y-12">
        <section className="col-span-3 flex rounded-2xl border-2 border-[#e8ebf0] bg-white p-12 shadow-[0_2px_6px_rgb(0_0_0/0.12)]">
          <div className="w-7/10">
            <CardTitle>Top Visits by Country</CardTitle>
            <WorldMap />
          </div>
          <div className="w-3/10 pt-4 pl-12">
            <h3 className="text-4xl/10 font-medium text-gray-900">Countries</h3>
            <p className="mt-6 text-[28px]/10 font-medium text-slate-600">
              Total number of visitors: <span className="font-bold">2.1K</span>
            </p>
            <ul className="mt-7 flex flex-col gap-8">
              {countries.map((country) => (
                <CountryRow key={country.name} country={country} />
              ))}
            </ul>
          </div>
        </section>

        <section className="rounded-2xl border-2 border-[#e8ebf0] bg-white p-12 shadow-[0_2px_6px_rgb(0_0_0/0.12)]">
          <CardTitle>Traffic by Device Type</CardTitle>
          <div className="mt-33 flex items-start gap-[34px] pl-10">
            <DonutChart />
            <div>
              <h3 className="text-[28px]/10 font-medium text-slate-700">List of Devices</h3>
              <ul className="mt-[18px] pl-1 font-['Liberation_Sans',sans-serif] text-2xl/11 text-[#333333]">
                {devices.map((device) => (
                  <li key={device.name} className="flex items-center gap-3">
                    <span className="size-4 rounded-full" style={{ backgroundColor: device.color }} />
                    {device.name}
                  </li>
                ))}
              </ul>
            </div>
          </div>
        </section>
      </div>
    </main>
  );
}

export default App;
